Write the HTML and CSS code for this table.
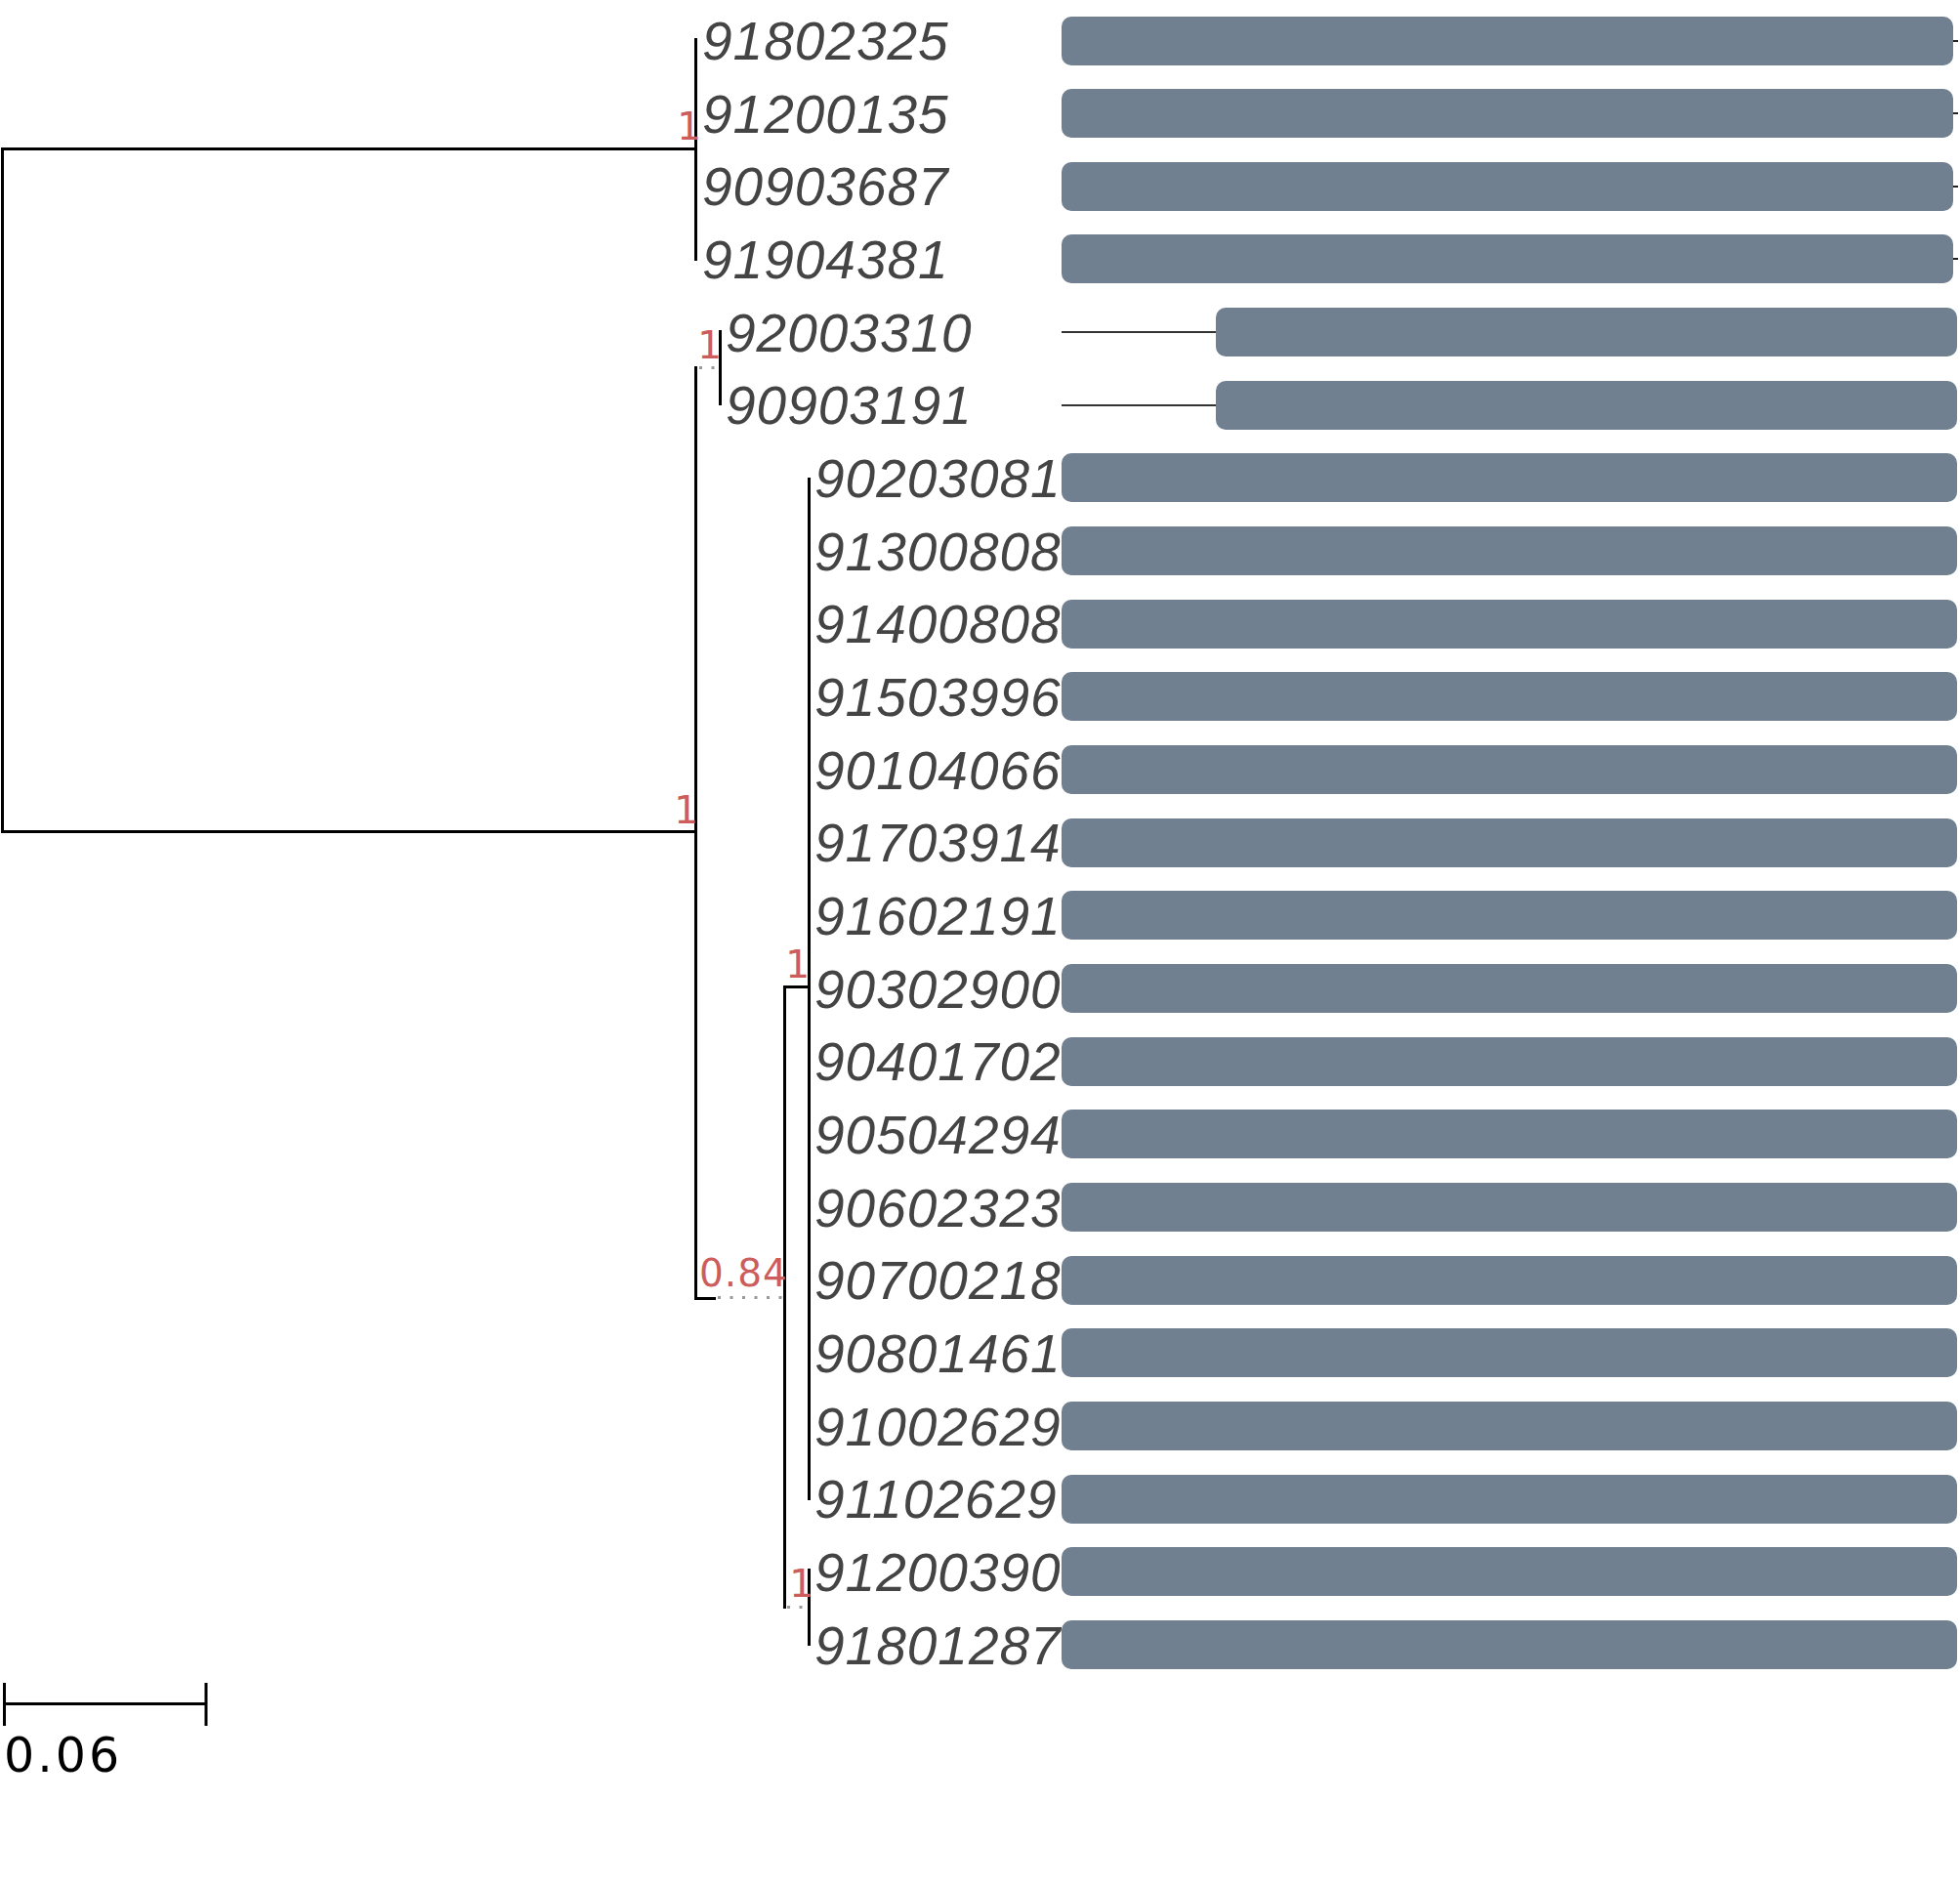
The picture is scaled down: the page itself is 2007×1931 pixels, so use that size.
FILE: index.html
```html
<!DOCTYPE html>
<html>
<head>
<meta charset="utf-8">
<title>Tree</title>
<link rel="stylesheet" href="styles.css">
</head>
<body>
<div class="page">
  <svg class="tree" width="1087" height="1931" viewBox="0 0 1087 1931" xmlns="http://www.w3.org/2000/svg">
    <g class="branches">
      <path d="M713,152.5 H2.5 V851.5 H713"/>
      <path d="M712.5,39 V267"/>
      <path d="M712.5,375 V1329.5 H733"/>
      <path d="M737.5,338 V415"/>
      <path d="M803.5,1009 V1647"/>
      <path d="M803.5,1010.5 H828"/>
      <path d="M828.5,489 V1536"/>
      <path d="M828.5,1606 V1685"/>
      <path d="M4.5,1723 V1767 M4.5,1744.5 H211 M211,1723 V1767"/>
    </g>
    <g class="dots">
      <path d="M716,376.5 H736"/>
      <path d="M735,1328.5 H802"/>
      <path d="M806,1645.5 H827"/>
    </g>
    <g class="support">
      <text x="718" y="143" class="end">1</text>
      <text x="715" y="843" class="end">1</text>
      <text x="739" y="367" class="end">1</text>
      <text x="716" y="1317" class="wide">0.84</text>
      <text x="829" y="1001" class="end">1</text>
      <text x="833" y="1635" class="end">1</text>
    </g>
    <g class="tips">
      <text x="719" y="61">91802325</text>
      <text x="719" y="135.7">91200135</text>
      <text x="719" y="210.3">90903687</text>
      <text x="719" y="285">91904381</text>
      <text x="743" y="359.7">92003310</text>
      <text x="743" y="434.3">90903191</text>
      <text x="834" y="509">90203081</text>
      <text x="834" y="583.7">91300808</text>
      <text x="834" y="658.3">91400808</text>
      <text x="834" y="733">91503996</text>
      <text x="834" y="807.7">90104066</text>
      <text x="834" y="882.3">91703914</text>
      <text x="834" y="957">91602191</text>
      <text x="834" y="1031.7">90302900</text>
      <text x="834" y="1106.3">90401702</text>
      <text x="834" y="1181">90504294</text>
      <text x="834" y="1255.7">90602323</text>
      <text x="834" y="1330.3">90700218</text>
      <text x="834" y="1405">90801461</text>
      <text x="834" y="1479.7">91002629</text>
      <text x="834" y="1554.3">91102629</text>
      <text x="834" y="1629">91200390</text>
      <text x="834" y="1703.7">91801287</text>
    </g>
    <text class="scale-label" x="4" y="1814">0.06</text>
  </svg>

  <div class="bars">
    <div class="row tip"><div class="bar"></div><div class="tick"></div></div>
    <div class="row tip"><div class="bar"></div><div class="tick"></div></div>
    <div class="row tip"><div class="bar"></div><div class="tick"></div></div>
    <div class="row tip"><div class="bar"></div><div class="tick"></div></div>
    <div class="row offset"><div class="stem"></div><div class="bar"></div></div>
    <div class="row offset"><div class="stem"></div><div class="bar"></div></div>
    <div class="row full"><div class="bar"></div></div>
    <div class="row full"><div class="bar"></div></div>
    <div class="row full"><div class="bar"></div></div>
    <div class="row full"><div class="bar"></div></div>
    <div class="row full"><div class="bar"></div></div>
    <div class="row full"><div class="bar"></div></div>
    <div class="row full"><div class="bar"></div></div>
    <div class="row full"><div class="bar"></div></div>
    <div class="row full"><div class="bar"></div></div>
    <div class="row full"><div class="bar"></div></div>
    <div class="row full"><div class="bar"></div></div>
    <div class="row full"><div class="bar"></div></div>
    <div class="row full"><div class="bar"></div></div>
    <div class="row full"><div class="bar"></div></div>
    <div class="row full"><div class="bar"></div></div>
    <div class="row full"><div class="bar"></div></div>
    <div class="row full"><div class="bar"></div></div>
  </div>
</div>
</body>
</html>
```

FILE: styles.css
```css
html, body {
  margin: 0;
  padding: 0;
  background: #ffffff;
}

.page {
  width: 2007px;
  height: 1931px;
  display: flex;
  align-items: flex-start;
  overflow: hidden;
}

.tree {
  display: block;
  flex: none;
}

.branches path {
  fill: none;
  stroke: #000000;
  stroke-width: 3;
  stroke-linecap: butt;
  stroke-linejoin: miter;
}

.dots path {
  fill: none;
  stroke: #9a9a9a;
  stroke-width: 3;
  stroke-dasharray: 3 9.5;
}

.support text {
  font-family: "DejaVu Sans", sans-serif;
  font-size: 39px;
  fill: #cd5c5c;
}

.support text.end {
  text-anchor: end;
}

.support text.wide {
  letter-spacing: 1px;
}

.tips text {
  font-family: "Liberation Sans", Arial, sans-serif;
  font-style: italic;
  font-size: 55px;
  letter-spacing: 1px;
  fill: #444444;
}

.scale-label {
  font-family: "DejaVu Sans", sans-serif;
  font-size: 49px;
  letter-spacing: 3px;
  fill: #000000;
}

.bars {
  flex: none;
  width: 920px;
  padding-top: 4.2px;
  display: grid;
  grid-auto-rows: 74.667px;
}

.row {
  display: flex;
  align-items: center;
}

.bar {
  height: 50px;
  border-radius: 10px;
  background: #708090;
}

.row.tip .bar {
  width: 913px;
}

.tick {
  width: 5px;
  height: 2px;
  background: #222222;
}

.row.full .bar {
  width: 917px;
}

.stem {
  width: 158px;
  height: 2px;
  background: #333333;
}

.row.offset .bar {
  width: 759px;
}
```
